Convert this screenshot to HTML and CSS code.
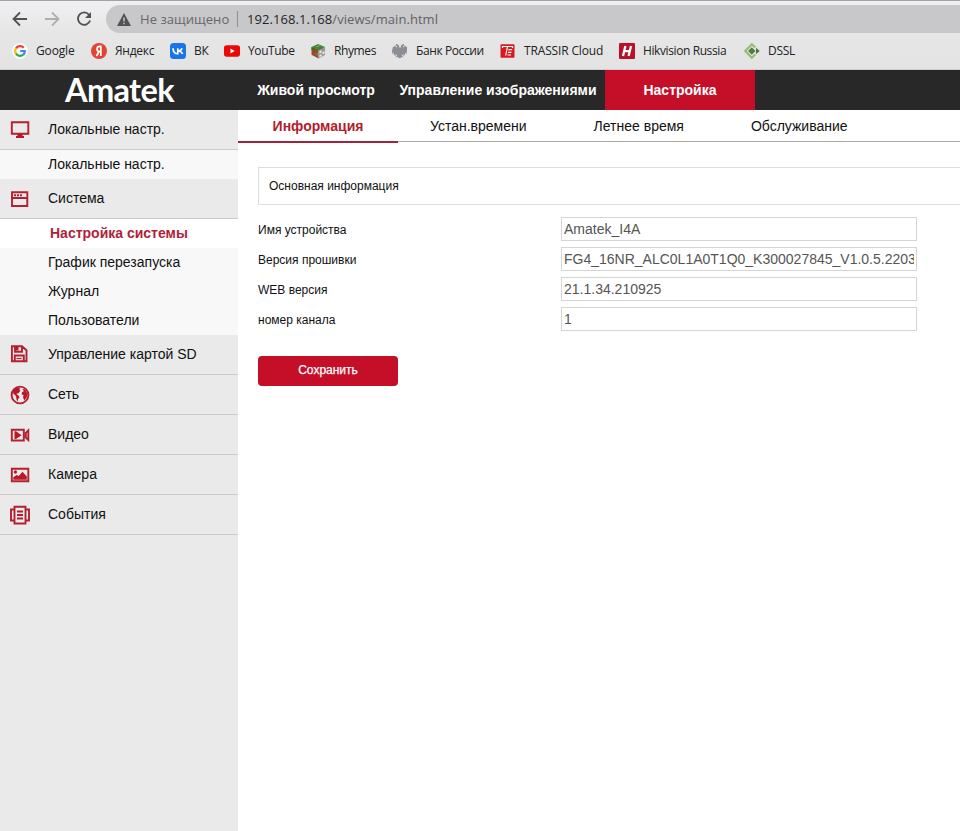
FILE: index.html
```html
<!DOCTYPE html>
<html lang="ru">
<head>
<meta charset="utf-8">
<title>Amatek</title>
<link rel="stylesheet" href="styles.css">
</head>
<body>
<div class="browser">
  <div class="toolbar">
    <svg class="nav-icon" viewBox="0 0 16 16"><path d="M15 8H2M8 1.5 1.5 8 8 14.5"/></svg>
    <svg class="nav-icon disabled" viewBox="0 0 16 16"><path d="M1 8h13M8 1.5 14.5 8 8 14.5"/></svg>
    <svg class="nav-icon" viewBox="0 0 16 16"><path d="M13 3.7A6.2 6.2 0 1 0 14.1 9.5"/><path d="M15 1v6H9z" fill="#505256" stroke="none"/></svg>
    <div class="address">
      <svg class="warn" viewBox="0 0 14 13"><path d="M7 0 14 13H0z" fill="#505256"/><path d="M7 4.5v4M7 9.7v1.5" stroke="#ccc" stroke-width="1.4"/></svg>
      <span class="insecure">Не защищено</span>
      <i class="divider"></i>
      <span class="url"><span class="host">192.168.1.168</span><span class="path">/views/main.html</span></span>
    </div>
  </div>
  <div class="bookmarks">
    <a class="bookmark"><svg viewBox="0 0 16 16"><circle cx="8" cy="8" r="8" fill="#fafafa"/><g fill="none" stroke-width="2.2"><path d="M4 5.4A4.8 4.8 0 0 1 11.7 4.7" stroke="#e94335"/><path d="M4 5.4a4.8 4.8 0 0 0 0 5.3" stroke="#fbbc05"/><path d="M4 10.7a4.8 4.8 0 0 0 7.2 1" stroke="#34a853"/><path d="M11.2 11.7A4.8 4.8 0 0 0 12.8 8H8.2" stroke="#4285f4"/></g></svg><span class="loose">Google</span></a>
    <a class="bookmark"><svg viewBox="0 0 16 16"><circle cx="8" cy="8" r="8" fill="#e34431"/><path d="M9.8 13V3.4H8.6a2.5 2.5 0 0 0 0 5.1h1.2M8 8.5 5.5 13" fill="none" stroke="#fff" stroke-width="1.7"/></svg><span>Яндекс</span></a>
    <a class="bookmark"><svg viewBox="0 0 16 16"><rect width="16" height="16" rx="3.5" fill="#1976e8"/><path d="M3 5.2c.2 3.6 2 5.5 4.8 5.5V5.2M8 8c2 0 3.4-1.2 4-2.8M8 8c2.2 0 3.8 1.2 4.7 2.9" fill="none" stroke="#fff" stroke-width="1.7"/></svg><span>ВК</span></a>
    <a class="bookmark"><svg viewBox="0 0 16 16"><rect y="2.3" width="16" height="11.4" rx="2.6" fill="#e80909"/><path d="M6.5 5.6v4.8L10.7 8z" fill="#fff"/></svg><span class="tight">YouTube</span></a>
    <a class="bookmark"><svg viewBox="0 0 16 16"><path d="m1.5 4 7 2v9.6l-7-3.8z" fill="#a5432c"/><path d="m8.5 6 6.5-2v8l-6.5 3.6z" fill="#999b93"/><path d="M1.5 4 8 1l7 3-6.5 3.5z" fill="#46833c"/><path d="M1.5 4 5 5.5v3L1.5 7z" fill="#386d2e"/><path d="m5.5 9.5 2.5 1V13l-2.5-1z" fill="#568b3d"/><path d="m9.5 8 2-.7v2.3l-2 .8zM12.5 9l2-.8v2.2l-2 .8zM9.5 12l2-.8v2l-2 .8z" fill="#eeeeeb"/><path d="m6 4 4-1.5" stroke="#79a957"/></svg><span class="tight">Rhymes</span></a>
    <a class="bookmark"><svg viewBox="0 0 16 16"><path d="M7.3 4.5 6.7 2 4.5 1 3.3 2.500l2 1-.4 1L3 3 1 4 0 7.500l.7 4.200.8-2.100 1 3.400.5-2.300.7 2.600 1-2.200.4 1.400-1.700 2 2-.4L8 15.500l1.600-1.400 2 .4-1.700-2 .4-1.400 1 2.200.7-2.600.5 2.300 1-3.400.8 2.100.7-4.200L15 4l-2-1-1.900 1.500-.4-1 2-1L11.500 1 9.300 2l-.6 2.500z" fill="#8b8e92"/></svg><span class="tight">Банк России</span></a>
    <a class="bookmark"><svg viewBox="0 0 16 16"><rect x=".5" y="1.2" width="14" height="13.6" rx="1" fill="#d71920"/><path d="M2.5 5V3.5h10V5M7.5 3.5l-1.8 9M8.500 6.600h3.700M8 9.300h3.400M7.500 12h3.500" fill="none" stroke="#fff" stroke-width="1.2"/></svg><span class="loose">TRASSIR Cloud</span></a>
    <a class="bookmark"><svg viewBox="0 0 16 16"><rect width="16" height="16" rx="1" fill="#b9112b"/><path d="M6.4 3 4 13M12 3 9.6 13M4.8 8.2h6" stroke="#fff" stroke-width="2.3"/></svg><span class="tight">Hikvision Russia</span></a>
    <a class="bookmark"><svg viewBox="0 0 16 16"><path d="m11.300 4.500-3.500-3.200L1.200 8l6.600 6.700 3.500-3.200" fill="none" stroke="#94bd72" stroke-width="2.2"/><path d="m7.800 4.300 3.700 3.700-3.700 3.700L4.100 8z" fill="#4c7f40"/><path d="m12 4.700 3.700 3.300-3.700 3.300z" fill="#4c763c"/></svg><span>DSSL</span></a>
  </div>
</div>

<header class="header">
  <div class="brand"><svg viewBox="0 0 110 25" role="img" aria-label="Amatek"><text x="0" y="24" textLength="109.5" lengthAdjust="spacing">Amatek</text></svg></div>
  <nav class="main-nav">
    <a>Живой просмотр</a>
    <a class="wide">Управление изображениями</a>
    <a class="active">Настройка</a>
  </nav>
</header>

<div class="layout">
  <aside class="sidebar">
    <a class="section"><svg viewBox="0 0 20 20"><path d="M1.8 2.3h16.5v11.4H1.8z" class="line"/><path d="M7.5 14h5v2H14v2H6v-2h1.500z" class="solid"/></svg><span>Локальные настр.</span></a>
    <a class="sub">Локальные настр.</a>
    <a class="section"><svg viewBox="0 0 20 20"><path d="M2 3.300h15.300v13.700H2zM2 9h15.500" class="line"/><path d="M4 6.300h8" class="line" stroke-dasharray="2 1"/></svg><span>Система</span></a>
    <a class="sub active">Настройка системы</a>
    <a class="sub">График перезапуска</a>
    <a class="sub">Журнал</a>
    <a class="sub">Пользователи</a>
    <a class="section"><svg viewBox="0 0 20 20"><path d="M1.900 1.300H12l4.500 4v10.900H1.900zM5 1.500v5.200h7V1.500M4.800 16v-5.500h9V16" class="line"/><path d="M6.500 13.500h5" class="line thin"/><path d="M5.500 2h3v3.500h-3z" class="solid"/></svg><span>Управление картой SD</span></a>
    <a class="section"><svg viewBox="0 0 20 20"><circle cx="10" cy="10" r="8.400" class="line"/><path d="m3 5.500 3.500-3 3.500.2-.5 2 .9 1.300-2.400 2.500-1.800.3 2.500 2 .8 1.500-1.500 2v2.500L6.500 14.500 6 11 3.200 8.500zM12.500 4l2.800.5 2.200 4.500-1 4-2.300 2.500-1.200-3.500.7-1.500-2.200-1.500.8-2 1.500-.7z" class="solid"/></svg><span>Сеть</span></a>
    <a class="section"><svg viewBox="0 0 20 20"><path d="M1.800 4.800h12v10.700h-12zM15.800 7.800l2.500-2.500v9.700l-2.500-2.500z" class="line"/><path d="M4.500 6.300H6l5.500 3.900L6 14H4.500z" class="solid"/></svg><span>Видео</span></a>
    <a class="section"><svg viewBox="0 0 20 20"><path d="M1.800 3.800h16.500v12.400H1.800z" class="line"/><path d="M3.300 14.700v-2.500l3.400-2.200 2 1 3.800-4.200 4.300 4.700v3.200z" class="solid"/><circle cx="5.400" cy="7" r="1.700" class="solid"/></svg><span>Камера</span></a>
    <a class="section"><svg viewBox="0 0 20 20"><path d="M4.500 1.800h11v16.700h-11zM4 4.500H1v11h3M16 4.500h3v11h-3M7 6.500h6M7 10h6M7 13.500h6" class="line"/></svg><span>События</span></a>
  </aside>

  <main class="content">
    <nav class="tabs"><a class="active">Информация</a><a>Устан.времени</a><a>Летнее время</a><a>Обслуживание</a></nav>
    <div class="panel-title">Основная информация</div>
    <form class="form">
      <label class="row"><span>Имя устройства</span><input value="Amatek_I4A"></label>
      <label class="row"><span>Версия прошивки</span><input value="FG4_16NR_ALC0L1A0T1Q0_K300027845_V1.0.5.220321"></label>
      <label class="row"><span>WEB версия</span><input value="21.1.34.210925"></label>
      <label class="row"><span>номер канала</span><input value="1"></label>
      <button class="save" type="button">Сохранить</button>
    </form>
  </main>
</div>
</body>
</html>
```
FILE: styles.css
```css
* { box-sizing: border-box; }
body {
  margin: 0;
  height: 831px;
  display: flex;
  flex-direction: column;
  overflow: hidden;
  background: #fff;
  color: #111;
  font: 14px "Liberation Sans", Arial, sans-serif;
}

.browser {
  height: 70px;
  flex: none;
  border-top: 1px solid #a3a2a6;
  border-bottom: 1px solid #cfcfcf;
  background: linear-gradient(#f0f0f2, #e6e6e7 45%, #e3e3e4);
  font-family: "Open Sans", "Noto Sans", sans-serif;
}
.toolbar { display: flex; padding: 4px 0 0 12px; height: 32px; }
.nav-icon {
  flex: none;
  width: 16px;
  height: 16px;
  margin: 6px 16px 0 0;
  fill: none;
  stroke: #505256;
  stroke-width: 1.8;
}
.nav-icon.disabled { stroke: #adaeb0; }
.address {
  flex: 1;
  display: flex;
  align-items: center;
  height: 28px;
  margin-left: -2px;
  padding-left: 11px;
  border-radius: 14px 0 0 14px;
  background: #c8c8ca;
  font-size: 13px;
  white-space: nowrap;
}
.warn { width: 14px; height: 13px; margin-right: 9px; }
.insecure { width: 97px; color: #64666a; letter-spacing: .05px; }
.divider { width: 1px; height: 16px; margin-right: 9px; background: #8e8f92; }
.url { letter-spacing: .06px; }
.host { color: #242528; }
.path { color: #606266; }
.bookmarks {
  display: grid;
  grid-template-columns: 79px 79px 54px 86px 82px 108px 119px 125px 1fr;
  padding: 10px 0 0 12px;
}
.bookmark {
  display: flex;
  align-items: center;
  gap: 8px;
  height: 16px;
  font-size: 12px;
  line-height: 16px;
  letter-spacing: -.25px;
  color: #222;
  white-space: nowrap;
}
.bookmark .loose { letter-spacing: -.15px; }
.bookmark .tight { letter-spacing: -.4px; }
.bookmark svg { flex: none; width: 16px; height: 16px; }

.header { display: flex; flex: none; height: 40px; background: #282828; }
.brand { width: 241px; padding: 8px 0 0 65px; }
.brand svg { display: block; width: 110px; height: 25px; overflow: visible; }
.brand text {
  fill: #fff;
  font: 700 32.5px Lato, sans-serif;
}
.main-nav { display: flex; }
.main-nav a {
  width: 150px;
  color: #fff;
  font-weight: bold;
  line-height: 40px;
  text-align: center;
  white-space: nowrap;
}
.main-nav .wide { width: 214px; }
.main-nav .active { background: #c50e27; }

.layout { display: flex; flex: 1; min-height: 0; }
.sidebar { width: 238px; flex: none; background: #eaeaea; }
.section {
  display: flex;
  align-items: center;
  height: 40px;
  padding-left: 10px;
  border-bottom: 1px solid #cbcbcb;
}
.section span { padding-bottom: 2px; }
.section svg { width: 20px; height: 20px; margin-right: 18px; }
.line { fill: none; stroke: #b4202f; stroke-width: 1.9; }
.thin { stroke-width: 1.2; }
.solid { fill: #b91827; }
.sub { display: block; height: 29px; padding-left: 48px; background: #f8f8f8; line-height: 29px; }
.sub.active { padding-left: 50px; background: #fff; color: #b01f3a; font-weight: bold; }

.content { flex: 1; min-width: 0; }
.tabs { display: flex; height: 32px; border-bottom: 1px solid #aaa; }
.tabs a { width: 160.5px; height: 33px; line-height: 33px; text-align: center; }
.tabs .active { width: 160px; border-bottom: 2px solid #a32238; color: #b31c2c; font-weight: bold; }
.panel-title {
  height: 38px;
  margin: 25px 0 0 20px;
  padding-left: 10px;
  border: 1px solid #ddd;
  border-right: 0;
  font-size: 12px;
  line-height: 36px;
}
.form { padding: 12px 0 0 20px; }
.row { display: flex; align-items: center; height: 24px; margin-bottom: 6px; font-size: 12px; }
.row span { width: 303px; padding-top: 2px; }
.row input {
  width: 356px;
  height: 24px;
  padding: 1px 2px;
  border: 1px solid #d5d5d5;
  border-radius: 0;
  background: #fff;
  color: #555;
  font: 14px "Liberation Sans", Arial, sans-serif;
}
.save {
  display: block;
  width: 140px;
  height: 30px;
  margin-top: 25px;
  padding: 0 0 2px;
  border: 0;
  border-radius: 4px;
  background: #c50e27;
  color: #fff;
  font: 12px "Liberation Sans", Arial, sans-serif;
  -webkit-text-stroke: .25px #fff;
}
```
